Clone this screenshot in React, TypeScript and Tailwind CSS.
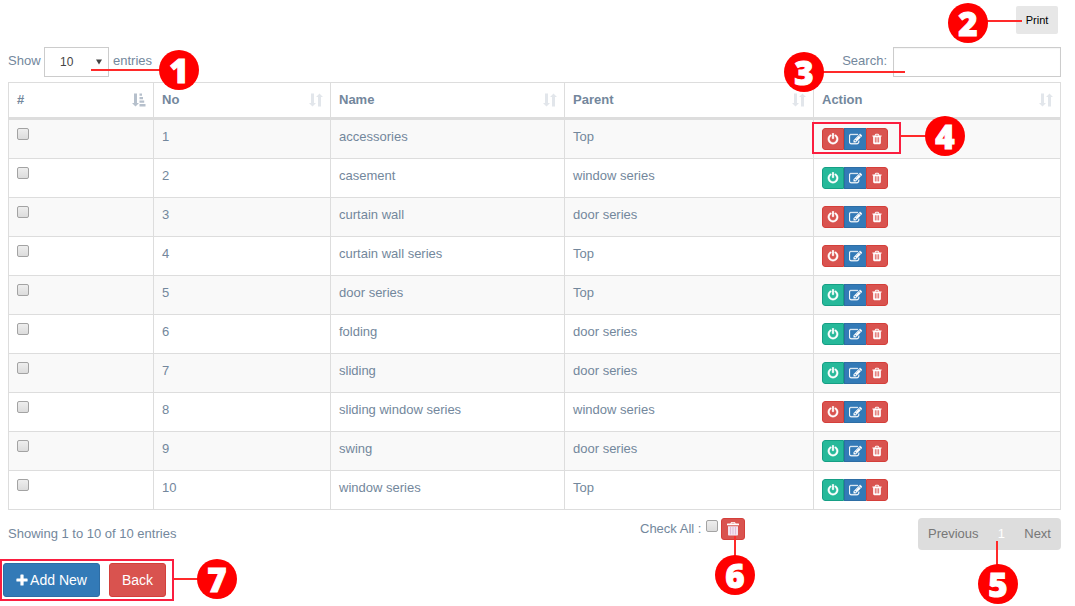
import React from 'react';

type Row = { name: string; parent: string; on: boolean };

const rows: Row[] = [
  { name: 'accessories', parent: 'Top', on: false },
  { name: 'casement', parent: 'window series', on: true },
  { name: 'curtain wall', parent: 'door series', on: false },
  { name: 'curtain wall series', parent: 'Top', on: false },
  { name: 'door series', parent: 'Top', on: true },
  { name: 'folding', parent: 'door series', on: true },
  { name: 'sliding', parent: 'door series', on: true },
  { name: 'sliding window series', parent: 'window series', on: false },
  { name: 'swing', parent: 'door series', on: true },
  { name: 'window series', parent: 'Top', on: true },
];

const GRID = 'grid grid-cols-[145px_177px_234px_249px_247px]';

function PowerIcon() {
  return (
    <svg viewBox="0 0 1792 1792" className="size-[12px] shrink-0" fill="currentColor" stroke="currentColor" strokeWidth="60">
      <path d="M1664 896q0 156-61 298t-164 245-245 164-298 61-298-61-245-164-164-245-61-298q0-182 80.500-343t226.500-270q43-32 95.500-25t83.500 50q32 42 24.500 94.500t-49.500 84.500q-98 74-151.500 181t-53.500 228q0 104 40.500 198.500t109.500 163.500 163.500 109.500 198.500 40.500 198.500-40.500 163.500-109.500 109.500-163.500 40.500-198.500q0-121-53.500-228t-151.500-181q-42-32-49.500-84.500t24.500-94.500q31-43 84-50t95 25q146 109 226.500 270t80.500 343zm-640-768v640q0 52-38 90t-90 38-90-38-38-90v-640q0-52 38-90t90-38 90 38 38 90z" />
    </svg>
  );
}

function EditIcon() {
  return (
    <svg viewBox="0 0 1792 1792" className="size-[13px] shrink-0" fill="currentColor" stroke="currentColor" strokeWidth="40">
      <path d="M888 1184l116-116-152-152-116 116v56h96v96h56zm440-720q-16-16-33 1l-350 350q-17 17-1 33t33-1l350-350q17-17 1-33zm80 594v190q0 119-84.500 203.500t-203.500 84.500h-832q-119 0-203.500-84.500t-84.500-203.500v-832q0-119 84.500-203.500t203.500-84.500h832q63 0 117 25 15 7 18 23 3 17-9 29l-49 49q-14 14-32 8-23-6-45-6h-832q-66 0-113 47t-47 113v832q0 66 47 113t113 47h832q66 0 113-47t47-113v-126q0-13 9-22l64-64q15-15 35-7t20 29zm-96-738l288 288-672 672h-288v-288zm444 132l-92 92-288-288 92-92q28-28 68-28t68 28l152 152q28 28 28 68t-28 68z" />
    </svg>
  );
}

function TrashIcon() {
  return (
    <svg viewBox="0 0 1792 1792" className="size-[12px] shrink-0" fill="currentColor">
      <path d="M704 1376v-704q0-14-9-23t-23-9h-64q-14 0-23 9t-9 23v704q0 14 9 23t23 9h64q14 0 23-9t9-23zm256 0v-704q0-14-9-23t-23-9h-64q-14 0-23 9t-9 23v704q0 14 9 23t23 9h64q14 0 23-9t9-23zm256 0v-704q0-14-9-23t-23-9h-64q-14 0-23 9t-9 23v704q0 14 9 23t23 9h64q14 0 23-9t9-23zm-544-992h448l-48-117q-7-9-17-11h-317q-10 2-17 11zm928 32v64q0 14-9 23t-23 9h-96v948q0 83-47 143.500t-113 60.500h-832q-66 0-113-58.500t-47-141.500v-952h-96q-14 0-23-9t-9-23v-64q0-14 9-23t23-9h309l70-167q15-37 54-63t79-26h320q40 0 79 26t54 63l70 167h309q14 0 23 9t9 23z" />
    </svg>
  );
}

function BinIcon() {
  return (
    <svg viewBox="0 0 12 14" className="h-[14px] w-[12px]">
      <path d="M4 2V.7h4V2" fill="none" stroke="#fff" strokeWidth="1" />
      <path d="M0 3.200V2q0-.5.500-.5h11q.5 0 .5.500v1.200z" fill="#fff" />
      <path d="M1 4.200h10v8.600q0 .8-.8.800H1.800q-.8 0-.8-.8z" fill="#f3e4f0" />
      <path d="M3.500 5v7.500M6 5v7.500M8.500 5v7.500" stroke="#dcb4d4" strokeWidth=".8" />
    </svg>
  );
}

function SortIcon() {
  return (
    <svg viewBox="0 0 14 14" className="size-[14px]" fill="#e2e6eb">
      <path d="M2 .5h3v9.500H7L3.500 13.500 0 10h2z" />
      <path d="M9 13.500h3V4H14L10.500.5 7 4h2z" />
    </svg>
  );
}

function SortAscIcon() {
  return (
    <svg viewBox="0 0 14 14" className="size-[14px]" fill="#b6c0cc">
      <path d="M2 .5h3v9.500H7L3.500 13.500 0 10h2z" />
      <path d="M7.500 .5h2.500v2.300H7.500zM7.500 4h3.500v2.300H7.500zM7.500 7.500h4.700v2.300H7.500zM7.500 11h6v2.400H7.500z" />
    </svg>
  );
}

function Checkbox({ className = '' }: { className?: string }) {
  return (
    <input
      type="checkbox"
      className={`block size-[12px] shrink-0 appearance-none rounded-[2px] border border-[#a3a3a3] bg-linear-to-b from-[#eeeeee] to-[#dcdcdc] ${className}`}
    />
  );
}

function HeadCell({ label, asc = false }: { label: string; asc?: boolean }) {
  return (
    <div className="flex h-[34px] items-center justify-between border-r border-[#ddd] pr-[7px] pl-2 font-bold">
      <span>{label}</span>
      {asc ? <SortAscIcon /> : <SortIcon />}
    </div>
  );
}

function Actions({ on }: { on: boolean }) {
  return (
    <div className="flex h-[22px] w-[66px] overflow-hidden rounded-[3px] text-white">
      <button
        className={`flex w-[22px] items-center justify-center rounded-l-[3px] border ${
          on ? 'border-[#169f85] bg-[#26b99a]' : 'border-[#d43f3a] bg-[#d9534f]'
        }`}
      >
        <PowerIcon />
      </button>
      <button className="flex w-[22px] items-center justify-center border-y border-l border-[#2e6da4] bg-[#337ab7]">
        <EditIcon />
      </button>
      <button className="flex w-[22px] items-center justify-center rounded-r-[3px] border border-[#d43f3a] bg-[#d9534f]">
        <TrashIcon />
      </button>
    </div>
  );
}

function Marker({ n, className }: { n: number; className: string }) {
  return (
    <div
      className={`absolute flex size-[40px] items-center justify-center rounded-full bg-[#ff0000] font-['Open_Sans',sans-serif] text-[33px] leading-none font-extrabold text-white [-webkit-text-stroke:1px_white] ${className}`}
    >
      {n}
    </div>
  );
}

export default function App() {
  return (
    <div className="relative h-[606px] w-[1075px] overflow-hidden bg-white font-['Liberation_Sans',Arial,sans-serif] text-[13px] leading-[18px] text-[#73879c]">
      <div className="flex h-[47px] justify-end pt-[6px] pr-[17px]">
        <button className="h-[28px] w-[42px] rounded-[2px] bg-[#e7e7e7] text-[11px] text-black">Print</button>
      </div>

      <div className="flex h-[35px] justify-between pr-[14px] pl-2">
        <div className="flex">
          <span className="w-9 pt-[5px]">Show</span>
          <div className="flex h-[30px] w-[65px] items-center justify-between border border-[#ccc] pr-[6px] pl-[15px] text-[12px] text-[#444]">
            <span>10</span>
            <svg viewBox="0 0 6 5" className="h-[6px] w-[6px]" fill="#444">
              <path d="M0 0h6L3 5z" />
            </svg>
          </div>
          <span className="pt-[5px] pl-1">entries</span>
        </div>
        <div className="flex">
          <span className="pt-[5px] pr-[6px]">Search:</span>
          <input className="h-[30px] w-[168px] border border-[#ccc] bg-white shadow-[inset_0_1px_1px_rgba(0,0,0,0.04)]" />
        </div>
      </div>

      <div className="ml-2 w-[1053px] border-t border-l border-[#ddd]">
        <div className={`${GRID} border-b-3 border-[#ddd]`}>
          <HeadCell label="#" asc />
          <HeadCell label="No" />
          <HeadCell label="Name" />
          <HeadCell label="Parent" />
          <HeadCell label="Action" />
        </div>
        {rows.map((r, i) => (
          <div
            key={r.name}
            className={`${GRID} h-[39px] border-b border-[#ddd] ${i % 2 === 0 ? 'bg-[#f9f9f9]' : 'bg-white'}`}
          >
            <div className="border-r border-[#ddd] pt-2 pl-2">
              <Checkbox />
            </div>
            <div className="border-r border-[#ddd] pt-2 pl-2">{i + 1}</div>
            <div className="border-r border-[#ddd] pt-2 pl-2">{r.name}</div>
            <div className="border-r border-[#ddd] pt-2 pl-2">{r.parent}</div>
            <div className="border-r border-[#ddd] pt-2 pl-2">
              <Actions on={r.on} />
            </div>
          </div>
        ))}
      </div>

      <div className="flex h-[49px] pt-2 pl-2">
        <span className="w-[632px] pt-[7px]">Showing 1 to 10 of 10 entries</span>
        <span className="w-[66px] pt-[2px]">Check All :</span>
        <Checkbox className="mt-[2px]" />
        <button className="ml-[3px] flex h-[22px] w-[24px] items-center justify-center rounded-[3px] border border-[#d43f3a] bg-[#d9534f]">
          <BinIcon />
        </button>
        <div className="ml-[173px] flex h-[32px] w-[143px] items-center justify-between rounded-[4px] bg-[#ddd] px-[10px] text-[#777]">
          <span>Previous</span>
          <span className="text-white">1</span>
          <span>Next</span>
        </div>
      </div>

      <div className="flex h-[42px] w-[174px] gap-[9px] border-2 border-[#fb1e3f] pt-[2px] pl-[1px] text-[14px] text-white">
        <button className="flex h-[34px] w-[97px] items-center justify-center gap-[2px] rounded-[3px] border border-[#2e6da4] bg-[#337ab7]">
          <svg viewBox="0 0 12 12" className="size-[12px]" fill="#fff">
            <path d="M4.400 1q0-.6.600-.6h2q.6 0 .6.600v3.400H11q.6 0 .6.600v2q0 .6-.6.600H7.600V11q0 .6-.6.600H5q-.6 0-.6-.6V7.600H1q-.6 0-.6-.6V5q0-.6.600-.6h3.400z" />
          </svg>
          <span>Add New</span>
        </button>
        <button className="h-[34px] w-[57px] rounded-[3px] border border-[#d43f3a] bg-[#d9534f]">Back</button>
      </div>

      <div className="absolute top-[122px] left-[812px] h-[32px] w-[89px] border-2 border-[#fb1e3f]" />
      <div className="absolute top-[69px] left-[91px] h-[2px] w-[70px] bg-[#ff2a2a]" />
      <div className="absolute top-[20px] left-[986px] h-[2px] w-[36px] bg-[#ff2a2a]" />
      <div className="absolute top-[71px] left-[822px] h-[2px] w-[83px] bg-[#ff2a2a]" />
      <div className="absolute top-[135px] left-[901px] h-[2px] w-[26px] bg-[#ff2a2a]" />
      <div className="absolute top-[541px] left-[996px] h-[25px] w-[2px] bg-[#ff2a2a]" />
      <div className="absolute top-[536px] left-[734px] h-[22px] w-[2px] bg-[#ff2a2a]" />
      <div className="absolute top-[578px] left-[174px] h-[2px] w-[25px] bg-[#ff2a2a]" />

      <Marker n={1} className="top-[50px] left-[159px]" />
      <Marker n={2} className="top-[3px] left-[948px]" />
      <Marker n={3} className="top-[52px] left-[784px]" />
      <Marker n={4} className="top-[116px] left-[925px]" />
      <Marker n={5} className="top-[564px] left-[978px]" />
      <Marker n={6} className="top-[555px] left-[715px]" />
      <Marker n={7} className="top-[559px] left-[197px]" />
    </div>
  );
}
